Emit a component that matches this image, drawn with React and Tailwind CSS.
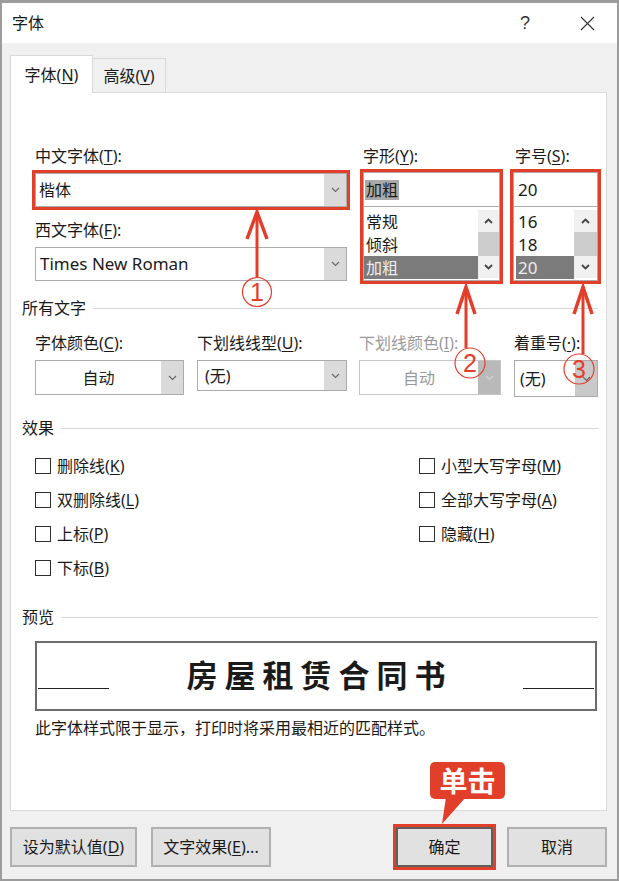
import clsx from 'clsx';

const RED = '#e23f2b';

const U = ({ children }) => <span className="underline underline-offset-2">{children}</span>;

const Chevron = ({ color = '#666666', up = false, width = 1.1 }) => (
  <svg width="9" height="6" viewBox="0 0 9 6" fill="none">
    <path d={up ? 'M1 5l3.5-3.5L8 5' : 'M1 1l3.5 3.5L8 1'} stroke={color} strokeWidth={width} />
  </svg>
);

const Combo = ({ className, textClass, btnClass = 'bg-[#dadada]', chevron, children }) => (
  <div className={clsx('flex bg-white border border-[#ababab]', className)}>
    <div className={clsx('flex-1 flex items-center', textClass)}>{children}</div>
    <div className={clsx('w-[22px] flex items-center justify-center', btnClass)}>
      <Chevron color={chevron} />
    </div>
  </div>
);

const ListBox = ({ value, items, selected, rowClass, scrollClass, inputClass }) => (
  <div className="mt-[5px] outline-[3px] outline-solid outline-[#e23f2b]">
    <div className={clsx('h-[35px] bg-white border border-[#ababab] flex items-center', inputClass)}>{value}</div>
    <div className="h-[74px] bg-white border border-t-0 border-[#ababab] flex pt-[3px]">
      <div className="flex-1 flex flex-col">
        {items.map((it) => (
          <div
            key={it}
            className={clsx(
              'h-[23px] flex items-center',
              rowClass,
              it === selected ? 'bg-[#7b7b7b] text-[#ededed]' : 'text-[#1a1a1a]'
            )}
          >
            {it}
          </div>
        ))}
      </div>
      <div className={clsx('flex flex-col', scrollClass)}>
        <div className="h-[22px] bg-[#f0f0f0] flex items-center justify-center">
          <Chevron up color="#444444" width={1.8} />
        </div>
        <div className="h-[24px] bg-[#cdcdcd]" />
        <div className="h-[22px] bg-[#f0f0f0] flex items-center justify-center">
          <Chevron color="#444444" width={1.8} />
        </div>
      </div>
    </div>
  </div>
);

const Section = ({ title, className }) => (
  <div className={clsx('flex items-center gap-[7px] h-[22px]', className)}>
    <span>{title}</span>
    <div className="flex-1 h-px bg-[#d7d7d7]" />
  </div>
);

const Check = ({ children }) => (
  <div className="h-[34px] flex items-center gap-[6px]">
    <div className="w-[16px] h-[16px] border border-[#2e2e2e] bg-white" />
    <span>{children}</span>
  </div>
);

const Button = ({ className, children }) => (
  <div className={clsx('h-[40px] flex items-center justify-center bg-[#e1e1e1] border-2', className)}>
    {children}
  </div>
);

export default function App() {
  return (
    <div className="relative w-[619px] h-[881px] bg-[#f0f0f0] border-t-[3px] border-x-2 border-b-2 border-[#9c9c9c] flex flex-col text-[16px] leading-[22px] text-[#1a1a1a] font-['Noto_Sans','Noto_Sans_CJK_SC',sans-serif]">
      {/* title bar */}
      <div className="h-[40px] shrink-0 bg-white flex items-center pl-[10px] pr-[22px]">
        <span>字体</span>
        <span className="ml-auto mr-[50px] text-[18px] text-[#333333] font-['Liberation_Sans',sans-serif]">?</span>
        <svg width="15" height="15" viewBox="0 0 15 15" fill="none">
          <path d="M1 1l13 13M14 1L1 14" stroke="#333333" strokeWidth="1.1" />
        </svg>
      </div>

      {/* tabs */}
      <div className="h-[50px] shrink-0 -mb-px flex items-end pl-[8px]">
        <div className="relative z-10 h-[38px] w-[83px] bg-white border border-b-0 border-[#d9d9d9] flex items-center justify-center">
          字体(<U>N</U>)
        </div>
        <div className="h-[34px] mb-px w-[73px] border border-l-0 border-b-0 border-[#d9d9d9] flex items-center justify-center">
          高级(<U>V</U>)
        </div>
      </div>

      {/* panel */}
      <div className="ml-[8px] w-[597px] h-[719px] shrink-0 bg-white border border-[#d9d9d9] flex flex-col pl-[11px] pr-[8px]">
        <div className="flex pl-[13px] pt-[52px]">
          <div className="w-[312px] flex flex-col">
            <span>中文字体(<U>T</U>):</span>
            <Combo className="h-[34px] mt-[6px] outline-[3px] outline-solid outline-[#e23f2b]" textClass="pl-[3px]">
              楷体
            </Combo>
            <span className="mt-[12px]">西文字体(<U>F</U>):</span>
            <Combo className="h-[34px] mt-[6px]" textClass="pl-[4px] text-[17px]">
              Times New Roman
            </Combo>
          </div>

          <div className="ml-[16px] w-[137px] flex flex-col">
            <span>字形(<U>Y</U>):</span>
            <ListBox
              value={<span className="bg-[#a9a9a9] leading-[20px] px-[1px]">加粗</span>}
              items={['常规', '倾斜', '加粗']}
              selected="加粗"
              rowClass="pl-[2px]"
              scrollClass="w-[21px]"
              inputClass="pl-[1px]"
            />
          </div>

          <div className="ml-[13px] w-[85px] flex flex-col">
            <span className="pl-[2px]">字号(<U>S</U>):</span>
            <ListBox
              value={<span className="text-[17px]">20</span>}
              items={['16', '18', '20']}
              selected="20"
              rowClass="ml-[2px] pl-[2px] text-[17px]"
              scrollClass="w-[23px]"
              inputClass="pl-[4px]"
            />
          </div>
        </div>

        <Section title="所有文字" className="mt-[16px]" />

        <div className="flex items-start pl-[13px] mt-[13px]">
          <div className="w-[162px] flex flex-col">
            <span>字体颜色(<U>C</U>):</span>
            <Combo className="w-[149px] h-[35px] mt-[6px]" textClass="justify-center">
              自动
            </Combo>
          </div>
          <div className="w-[162px] flex flex-col">
            <span>下划线线型(<U>U</U>):</span>
            <Combo className="w-[150px] h-[31px] mt-[6px]" textClass="pl-[7px]">
              (无)
            </Combo>
          </div>
          <div className="w-[155px] flex flex-col text-[#9a9a9a]">
            <span>下划线颜色(<U>I</U>):</span>
            <Combo
              className="w-[142px] h-[35px] mt-[6px] border-[#c6c6c6]"
              textClass="justify-center"
              btnClass="bg-[#b9b9b9]"
              chevron="#d4d4d4"
            >
              自动
            </Combo>
          </div>
          <div className="flex flex-col">
            <span>着重号(<U>·</U>):</span>
            <Combo className="w-[84px] h-[37px] mt-[6px]" textClass="pl-[5px]" btnClass="bg-[#c9c9c9]">
              (无)
            </Combo>
          </div>
        </div>

        <Section title="效果" className="mt-[20px]" />

        <div className="grid grid-cols-[384px_1fr] pl-[13px] mt-[10px]">
          <Check>删除线(<U>K</U>)</Check>
          <Check>小型大写字母(<U>M</U>)</Check>
          <Check>双删除线(<U>L</U>)</Check>
          <Check>全部大写字母(<U>A</U>)</Check>
          <Check>上标(<U>P</U>)</Check>
          <Check>隐藏(<U>H</U>)</Check>
          <Check>下标(<U>B</U>)</Check>
        </div>

        <Section title="预览" className="mt-[21px]" />

        <div className="ml-[13px] mt-[13px] w-[562px] h-[70px] border-2 border-[#6b6b6b] flex items-start px-[1px]">
          <div className="w-[71px] h-px bg-[#222222] mt-[45px]" />
          <div className="flex-1 flex justify-center pt-[15px]">
            <span className="text-[31px] leading-[34px] font-semibold tracking-[7px] pl-[7px] text-[#1a1a1a]">
              房屋租赁合同书
            </span>
          </div>
          <div className="w-[71px] h-px bg-[#222222] mt-[45px]" />
        </div>

        <div className="ml-[13px] mt-[6px]">此字体样式限于显示，打印时将采用最相近的匹配样式。</div>
      </div>

      {/* buttons */}
      <div className="flex mt-[16px] pl-[8px]">
        <Button className="w-[127px] border-[#b0b0b0]">
          设为默认值(<U>D</U>)
        </Button>
        <Button className="ml-[14px] w-[120px] border-[#b0b0b0]">
          文字效果(<U>E</U>)...
        </Button>
        <Button className="ml-[125px] w-[97px] border-[#5e5e5e] outline-[3px] outline-solid outline-[#e23f2b]">
          确定
        </Button>
        <Button className="ml-[14px] w-[100px] border-[#b0b0b0]">取消</Button>
      </div>

      {/* callout */}
      <div className="absolute left-[428px] top-[759px] w-[75px] h-[37px] rounded-[5px] bg-[#e23f2b] text-white text-[28px] leading-none font-bold flex items-center justify-center">
        单击
      </div>

      {/* annotation arrows */}
      <svg className="absolute -left-[2px] -top-[3px] w-[619px] h-[881px] pointer-events-none" viewBox="0 0 619 881" fill="none">
        <polygon points="446,797 466,797 442,824" fill={RED} />
        <g stroke={RED}>
          <line x1="257" y1="214" x2="257" y2="277" strokeWidth="3" />
          <polyline points="247,239 257,212 267,239" strokeWidth="3.5" />
          <circle cx="257" cy="292" r="14.5" strokeWidth="1.2" />

          <line x1="466" y1="288" x2="466" y2="348" strokeWidth="3" />
          <polyline points="457,314 466,287 475,314" strokeWidth="3.5" />
          <circle cx="470" cy="363" r="15" strokeWidth="1.2" />

          <line x1="583" y1="288" x2="583" y2="354" strokeWidth="3" />
          <polyline points="574,314 583,287 592,314" strokeWidth="3.5" />
          <circle cx="579" cy="369" r="15" strokeWidth="1.2" />
        </g>
        <g fill={RED} fontSize="25" textAnchor="middle" fontFamily="Liberation Sans, sans-serif">
          <text x="257" y="301">1</text>
          <text x="470" y="372">2</text>
          <text x="579" y="378">3</text>
        </g>
      </svg>
    </div>
  );
}
